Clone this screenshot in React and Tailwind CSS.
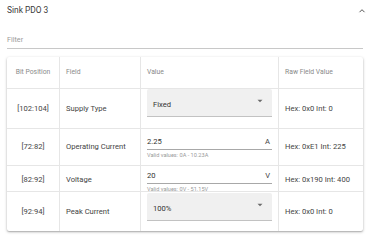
import React from "react";

const Arrow = () => (
  <svg width="6" height="4" viewBox="0 0 6 4" className="shrink-0">
    <path d="M0.5 0.8 L3 3.3 L5.5 0.8 Z" fill="#6b6b6b" />
  </svg>
);

const Select = ({ value }) => (
  <div className="h-[28px] w-full bg-[#f0f0f0] rounded-t-[2px] border-b border-[#c2c2c2] flex items-end justify-between pl-[6px] pr-[9px] pb-[7px]">
    <span className="text-[7.6px] leading-none text-[#333]">{value}</span>
    <span className="mb-[6px]"><Arrow /></span>
  </div>
);

const Input = ({ value, unit, helper }) => (
  <div className="w-full">
    <div className="flex items-center justify-between border-b border-[#a8a8a8] h-[14px] pb-[2px]">
      <span className="text-[7.6px] leading-none text-[#333]">{value}</span>
      <span className="text-[7.6px] leading-none text-[#444] pr-[2px]">{unit}</span>
    </div>
    <div className="text-[5.6px] leading-none text-[#9a9a9a] mt-[3px]">{helper}</div>
  </div>
);

const Row = ({ bit, field, children, raw, h, valueCls = "", last }) => (
  <div
    className={`grid grid-cols-[53px_81px_138px_1fr] ${h} ${last ? "" : "border-b border-[#e6e6e6]"}`}
  >
    <div className="flex items-center justify-center border-r border-[#e6e6e6] text-[7.6px] text-[#444]">{bit}</div>
    <div className="flex items-center pl-[6px] border-r border-[#e6e6e6] text-[7.6px] text-[#444]">{field}</div>
    <div className={`px-[6px] border-r border-[#e6e6e6] flex ${valueCls}`}>{children}</div>
    <div className="flex items-center pl-[6px] text-[7.6px] text-[#444]">{raw}</div>
  </div>
);

export default function App() {
  return (
    <div className="w-[370px] h-[240px] bg-white font-['Roboto',sans-serif] overflow-hidden">
      <div className="flex items-center justify-between pl-[7px] pr-[4px] pt-[5px] h-[16px]">
        <span className="text-[8.4px] leading-none text-[#3a3a3a]">Sink PDO 3</span>
        <svg width="8" height="6" viewBox="0 0 8 6">
          <path d="M1.5 4.2 L4 1.7 L6.5 4.2" stroke="#555" strokeWidth="1" fill="none" />
        </svg>
      </div>
      <div className="mx-[7px] mt-[20px] border-b border-[#c8c8c8] h-[13px] flex items-start">
        <span className="text-[7.2px] leading-none text-[#9a9a9a]">Filter</span>
      </div>
      <div className="mx-[7px] mt-[8px] bg-white shadow-[0_1px_3px_rgba(0,0,0,0.28),0_1px_1px_rgba(0,0,0,0.12)] rounded-[2px]">
        <div className="grid grid-cols-[53px_81px_138px_1fr] h-[32px] border-b border-[#e6e6e6] text-[6.8px] text-[#8a8a8a]">
          <div className="flex items-center justify-center border-r border-[#e6e6e6]">Bit Position</div>
          <div className="flex items-center pl-[6px] border-r border-[#e6e6e6]">Field</div>
          <div className="flex items-center pl-[6px] border-r border-[#e6e6e6]">Value</div>
          <div className="flex items-center pl-[6px]">Raw Field Value</div>
        </div>
        <Row bit="[102:104]" field="Supply Type" raw="Hex: 0x0 Int: 0" h="h-[40px]" valueCls="items-start pt-[0px]">
          <Select value="Fixed" />
        </Row>
        <Row bit="[72:82]" field="Operating Current" raw="Hex: 0xE1 Int: 225" h="h-[37px]" valueCls="items-start pt-[7px]">
          <Input value="2.25" unit="A" helper="Valid values: 0A - 10.23A" />
        </Row>
        <Row bit="[82:92]" field="Voltage" raw="Hex: 0x190 Int: 400" h="h-[26px]" valueCls="items-start pt-[4px]">
          <Input value="20" unit="V" helper="Valid values: 0V - 51.15V" />
        </Row>
        <Row bit="[92:94]" field="Peak Current" raw="Hex: 0x0 Int: 0" h="h-[39px]" valueCls="items-start pt-[1px]" last>
          <Select value="100%" />
        </Row>
      </div>
    </div>
  );
}
